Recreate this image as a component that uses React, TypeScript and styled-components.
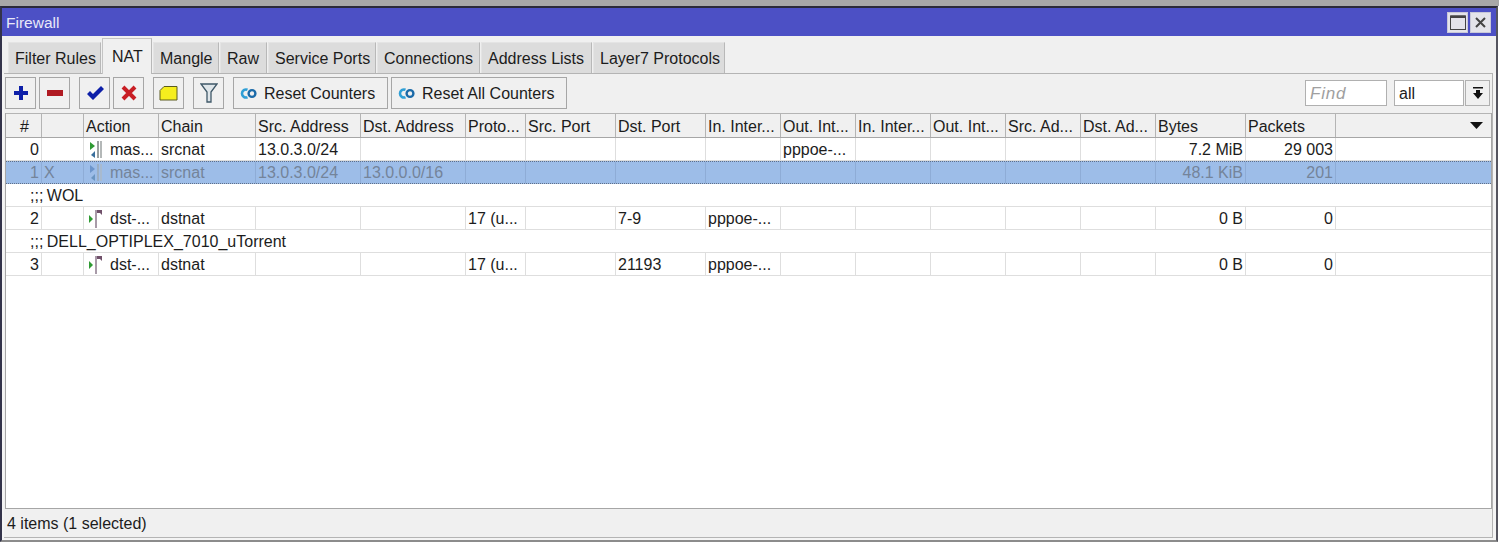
import React from "react";
import styled, { createGlobalStyle } from "styled-components";

const GlobalStyle = createGlobalStyle`
  html, body {
    margin: 0;
    padding: 0;
    background: #ffffff;
    overflow: hidden;
  }
  body {
    font-family: "Liberation Sans", Arial, sans-serif;
    font-size: 16px;
    color: #1c1c1c;
  }
`;

const TopStrip = styled.div`
  height: 6px;
  background: #a8a8a8;
`;

const Window = styled.div`
  width: 1498px;
  height: 536px;
  box-sizing: border-box;
  border-top: 2px solid #2b2b3a;
  border-left: 2px solid #33334a;
  border-right: 2px solid #55555f;
  border-bottom: 2px solid #8c8c8c;
  padding-bottom: 2px;
  background: #f4f4f4;
  display: flex;
  flex-direction: column;
`;

const TitleBar = styled.div`
  height: 28px;
  flex-shrink: 0;
  box-sizing: border-box;
  padding: 0 5px 0 4px;
  background: #4c50c5;
  color: #e8e8f8;
  display: flex;
  align-items: center;
  justify-content: space-between;
`;

const TitleText = styled.span`
  padding-top: 2px;
  font-size: 15.5px;
`;

const TitleButtons = styled.div`
  display: flex;
  gap: 2px;
`;

const TitleButton = styled.div`
  width: 21px;
  height: 21px;
  box-sizing: border-box;
  background: #e4e4ea;
  border: 1px solid #c8c8d8;
  display: flex;
  align-items: center;
  justify-content: center;
`;

const TabBar = styled.div`
  height: 37px;
  flex-shrink: 0;
  padding-left: 6px;
  box-sizing: border-box;
  display: flex;
  align-items: flex-end;
  gap: 1px;
  background: #f0f0f0;
`;

const Tab = styled.div<{ $w: number; $active?: boolean }>`
  width: ${(p) => p.$w}px;
  height: ${(p) => (p.$active ? 36 : 31)}px;
  margin-bottom: ${(p) => (p.$active ? -1 : 0)}px;
  position: relative;
  z-index: ${(p) => (p.$active ? 1 : 0)};
  box-sizing: border-box;
  background: ${(p) => (p.$active ? "#f0f0f0" : "#dcdcdc")};
  border-top: 1px solid ${(p) => (p.$active ? "#c4c4c4" : "#e4e4e4")};
  border-left: 1px solid ${(p) => (p.$active ? "#c4c4c4" : "#e4e4e4")};
  border-right: 1px solid #b8b8b8;
  display: flex;
  align-items: center;
  white-space: nowrap;
  padding: 1px 0 0 ${(p) => (p.$active ? 9 : 6)}px;
`;

const Panel = styled.div`
  flex: 1;
  margin: 0 3px 0 2px;
  background: #f0f0f0;
  border-top: 1px solid #b4b4b4;
  border-right: 1px solid #b4b4b4;
  border-bottom: 1px solid #b4b4b4;
  display: flex;
  flex-direction: column;
  min-height: 0;
`;

const Toolbar = styled.div`
  height: 39px;
  flex-shrink: 0;
  box-sizing: border-box;
  padding: 3px 2px 0 1px;
  display: flex;
  align-items: flex-start;
`;

const ToolButton = styled.div<{ $w?: number; $ml?: number }>`
  width: ${(p) => p.$w ?? 31}px;
  height: 32px;
  margin-left: ${(p) => p.$ml ?? 0}px;
  box-sizing: border-box;
  background: #f0f0f0;
  border: 1px solid #a6a6a6;
  display: flex;
  align-items: center;
  justify-content: ${(p) => (p.$w ? "flex-start" : "center")};
  padding-left: ${(p) => (p.$w ? 6 : 0)}px;
  gap: 7px;
  white-space: nowrap;
  flex-shrink: 0;
`;

const ButtonLabel = styled.span`
  padding-top: 2px;
`;

const Spacer = styled.div`
  flex: 1;
`;

const Field = styled.div<{ $w: number; $muted?: boolean; $ml?: number }>`
  width: ${(p) => p.$w}px;
  height: 26px;
  margin: 3px 0 0 ${(p) => p.$ml ?? 0}px;
  box-sizing: border-box;
  background: #ffffff;
  border: 1px solid #b0b0b0;
  padding: 1px 0 0 4px;
  display: flex;
  align-items: center;
  color: ${(p) => (p.$muted ? "#a0a0a0" : "#1c1c1c")};
  font-style: ${(p) => (p.$muted ? "italic" : "normal")};
  font-size: ${(p) => (p.$muted ? "17px" : "16px")};
  letter-spacing: ${(p) => (p.$muted ? "0.8px" : "0")};
`;

const DropButton = styled.div`
  width: 25px;
  height: 26px;
  margin: 3px 0 0 1px;
  box-sizing: border-box;
  background: #f0f0f0;
  border: 1px solid #b0b0b0;
  display: flex;
  align-items: center;
  justify-content: center;
`;

const Table = styled.div`
  flex: 1;
  margin-left: 1px;
  background: #ffffff;
  border-bottom: 1px solid #a6a6a6;
  border-right: 1px solid #a6a6a6;
  border-left: 1px solid #a6a6a6;
  min-height: 0;
  display: flex;
  flex-direction: column;
`;

const HeaderRow = styled.div`
  height: 25px;
  flex-shrink: 0;
  box-sizing: border-box;
  display: flex;
  background: #f0f0f0;
  border-top: 1px solid #b4b4b4;
  border-bottom: 1px solid #a6a6a6;
`;

const HeaderCell = styled.div<{ $w: number; $center?: boolean }>`
  width: ${(p) => p.$w}px;
  box-sizing: border-box;
  border-right: 1px solid #b4b4b4;
  padding: 2px 0 0 2px;
  display: flex;
  align-items: center;
  justify-content: ${(p) => (p.$center ? "center" : "flex-start")};
  flex-shrink: 0;
  white-space: nowrap;
`;

const HeaderFill = styled.div`
  flex: 1;
  display: flex;
  justify-content: flex-end;
  align-items: center;
  padding-right: 8px;
`;

const Row = styled.div<{ $selected?: boolean }>`
  height: 23px;
  box-sizing: border-box;
  display: flex;
  background: ${(p) => (p.$selected ? "#9dbde8" : "#ffffff")};
  color: ${(p) => (p.$selected ? "#74849a" : "#1c1c1c")};
  border-bottom: 1px ${(p) => (p.$selected ? "dotted #5f6f88" : "solid #dedede")};
  border-top: ${(p) => (p.$selected ? "1px dotted #5f6f88" : "0")};
`;

const Cell = styled.div<{ $w: number; $right?: boolean; $selected?: boolean }>`
  width: ${(p) => p.$w}px;
  box-sizing: border-box;
  border-right: 1px solid ${(p) => (p.$selected ? "#8eacd6" : "#dedede")};
  padding: ${(p) => (p.$selected ? 0 : 2)}px 2px 0;
  display: flex;
  align-items: center;
  justify-content: ${(p) => (p.$right ? "flex-end" : "flex-start")};
  flex-shrink: 0;
  white-space: nowrap;
  overflow: hidden;
`;

const CellFill = styled.div`
  flex: 1;
`;

const ActionCell = styled(Cell)`
  padding-left: 4px;
  gap: 4px;
`;

const CommentRow = styled.div`
  height: 23px;
  box-sizing: border-box;
  padding: 2px 0 0 24px;
  display: flex;
  align-items: center;
  border-bottom: 1px solid #dedede;
  white-space: pre;
  word-spacing: -1px;
`;

const StatusBar = styled.div`
  height: 28px;
  flex-shrink: 0;
  box-sizing: border-box;
  padding: 1px 0 0 3px;
  display: flex;
  align-items: center;
`;

const columns = [36, 42, 75, 97, 105, 105, 60, 90, 90, 75, 75, 75, 75, 75, 75, 90, 90];
const headers = [
  "#", "", "Action", "Chain", "Src. Address", "Dst. Address", "Proto...", "Src. Port", "Dst. Port",
  "In. Inter...", "Out. Int...", "In. Inter...", "Out. Int...", "Src. Ad...", "Dst. Ad...", "Bytes", "Packets",
];
const tabs: [string, number][] = [
  ["Filter Rules", 93], ["NAT", 50], ["Mangle", 66], ["Raw", 47], ["Service Ports", 108],
  ["Connections", 103], ["Address Lists", 111], ["Layer7 Protocols", 132],
];

type NatRule = {
  comment?: string;
  num: string;
  flag?: string;
  kind: "masq" | "dst";
  action: string;
  chain: string;
  cells: Record<number, string>;
  selected?: boolean;
};

const rules: NatRule[] = [
  { num: "0", kind: "masq", action: "mas...", chain: "srcnat", cells: { 4: "13.0.3.0/24", 10: "pppoe-...", 15: "7.2 MiB", 16: "29 003" } },
  { num: "1", flag: "X", kind: "masq", action: "mas...", chain: "srcnat", selected: true, cells: { 4: "13.0.3.0/24", 5: "13.0.0.0/16", 15: "48.1 KiB", 16: "201" } },
  { comment: "WOL", num: "2", kind: "dst", action: "dst-...", chain: "dstnat", cells: { 6: "17 (u...", 8: "7-9", 9: "pppoe-...", 15: "0 B", 16: "0" } },
  { comment: "DELL_OPTIPLEX_7010_uTorrent", num: "3", kind: "dst", action: "dst-...", chain: "dstnat", cells: { 6: "17 (u...", 8: "21193", 9: "pppoe-...", 15: "0 B", 16: "0" } },
];

const MasqIcon = ({ faded }: { faded?: boolean }) => (
  <svg width="18" height="20" viewBox="0 0 18 20" style={{ flexShrink: 0, opacity: faded ? 0.5 : 1 }}>
    <path d="M2 2 L7 6 L2 10 Z" fill={faded ? "#3f6fb0" : "#2e9a32"} />
    <path d="M7 11 L3 15 L7 18 Z" fill="#3a6f9c" />
    <rect x="9" y="1" width="2" height="17" fill="#9aa0a0" />
    <rect x="12" y="1" width="2" height="17" fill="#b4b8b8" />
  </svg>
);

const DstIcon = () => (
  <svg width="18" height="20" viewBox="0 0 18 20" style={{ flexShrink: 0 }}>
    <path d="M1 6 L5 10 L1 14 Z" fill="#2e9a32" />
    <rect x="7" y="1" width="2" height="18" fill="#a89aa8" />
    <path d="M9 1 H14 V6 L12 4 L9 4 Z" fill="#70506a" />
  </svg>
);

const ResetIcon = () => (
  <svg width="17" height="11" viewBox="0 0 17 11">
    <path d="M7.5 1.8 A4 4 0 1 0 7.5 9.2" fill="none" stroke="#2f9fd6" strokeWidth="2.6" />
    <circle cx="12" cy="5.5" r="3.4" fill="none" stroke="#1b6aa8" strokeWidth="2.4" />
  </svg>
);

export default function App() {
  return (
    <>
      <GlobalStyle />
      <TopStrip />
      <Window>
        <TitleBar>
          <TitleText>Firewall</TitleText>
          <TitleButtons>
            <TitleButton>
              <svg width="16" height="15" viewBox="0 0 16 15">
                <rect x="0.5" y="1" width="15" height="13.5" fill="none" stroke="#444" />
                <rect x="0.5" y="0.5" width="15" height="2.5" fill="#444" />
              </svg>
            </TitleButton>
            <TitleButton>
              <svg width="13" height="13" viewBox="0 0 13 13">
                <path d="M2 2 L11 11 M11 2 L2 11" stroke="#444" strokeWidth="2" />
              </svg>
            </TitleButton>
          </TitleButtons>
        </TitleBar>
        <TabBar>
          {tabs.map(([label, w]) => (
            <Tab key={label} $w={w} $active={label === "NAT"}>
              {label}
            </Tab>
          ))}
        </TabBar>
        <Panel>
          <Toolbar>
            <ToolButton>
              <svg width="16" height="16" viewBox="0 0 16 16">
                <path d="M6 1 H10 V6 H15 V10 H10 V15 H6 V10 H1 V6 H6 Z" fill="#0d1fa8" />
              </svg>
            </ToolButton>
            <ToolButton $ml={3}>
              <svg width="16" height="6" viewBox="0 0 16 6">
                <rect width="16" height="6" fill="#b01a22" />
              </svg>
            </ToolButton>
            <ToolButton $ml={9}>
              <svg width="18" height="15" viewBox="0 0 18 15">
                <path d="M1 8 L4 5 L7 8 L15 0 L18 3 L7 14 Z" fill="#0d1fa8" />
              </svg>
            </ToolButton>
            <ToolButton $ml={3}>
              <svg width="16" height="16" viewBox="0 0 16 16">
                <path d="M2 2 L14 14 M14 2 L2 14" stroke="#c81e24" strokeWidth="4" />
              </svg>
            </ToolButton>
            <ToolButton $ml={9}>
              <svg width="19" height="15" viewBox="0 0 19 15">
                <path d="M5 0.5 H18 V14 H1 V4.5 Z" fill="#f6ee1e" stroke="#5c5c20" />
              </svg>
            </ToolButton>
            <ToolButton $ml={9}>
              <svg width="18" height="20" viewBox="0 0 18 20">
                <path d="M1 1 H17 L11 9 V19 H7 V9 Z" fill="#dfe6ea" stroke="#3f5868" strokeWidth="1.3" />
              </svg>
            </ToolButton>
            <ToolButton $w={155} $ml={9}>
              <ResetIcon />
              <ButtonLabel>Reset Counters</ButtonLabel>
            </ToolButton>
            <ToolButton $w={176} $ml={3}>
              <ResetIcon />
              <ButtonLabel>Reset All Counters</ButtonLabel>
            </ToolButton>
            <Spacer />
            <Field $w={82} $muted>
              Find
            </Field>
            <Field $w={70} $ml={7}>
              all
            </Field>
            <DropButton>
              <svg width="12" height="13" viewBox="0 0 12 13">
                <rect x="1" y="0" width="10" height="1.5" fill="#111" />
                <path d="M4 3 H8 V6 H11 L6 12 L1 6 H4 Z" fill="#111" />
              </svg>
            </DropButton>
          </Toolbar>
          <Table>
            <HeaderRow>
              {headers.map((h, i) => (
                <HeaderCell key={i} $w={columns[i]} $center={i === 0}>
                  {h}
                </HeaderCell>
              ))}
              <HeaderFill>
                <svg width="13" height="7" viewBox="0 0 13 7">
                  <path d="M0 0 H13 L6.5 7 Z" fill="#111" />
                </svg>
              </HeaderFill>
            </HeaderRow>
            {rules.map((rule) => (
              <React.Fragment key={rule.num}>
                {rule.comment && <CommentRow>;;; {rule.comment}</CommentRow>}
                <Row $selected={rule.selected}>
                  {columns.map((w, i) => {
                    if (i === 2) {
                      return (
                        <ActionCell key={i} $w={w} $selected={rule.selected}>
                          {rule.kind === "masq" ? <MasqIcon faded={rule.selected} /> : <DstIcon />}
                          {rule.action}
                        </ActionCell>
                      );
                    }
                    const text =
                      i === 0 ? rule.num : i === 1 ? rule.flag : i === 3 ? rule.chain : rule.cells[i];
                    return (
                      <Cell key={i} $w={w} $right={i === 0 || i >= 15} $selected={rule.selected}>
                        {text}
                      </Cell>
                    );
                  })}
                  <CellFill />
                </Row>
              </React.Fragment>
            ))}
          </Table>
          <StatusBar>4 items (1 selected)</StatusBar>
        </Panel>
      </Window>
    </>
  );
}
